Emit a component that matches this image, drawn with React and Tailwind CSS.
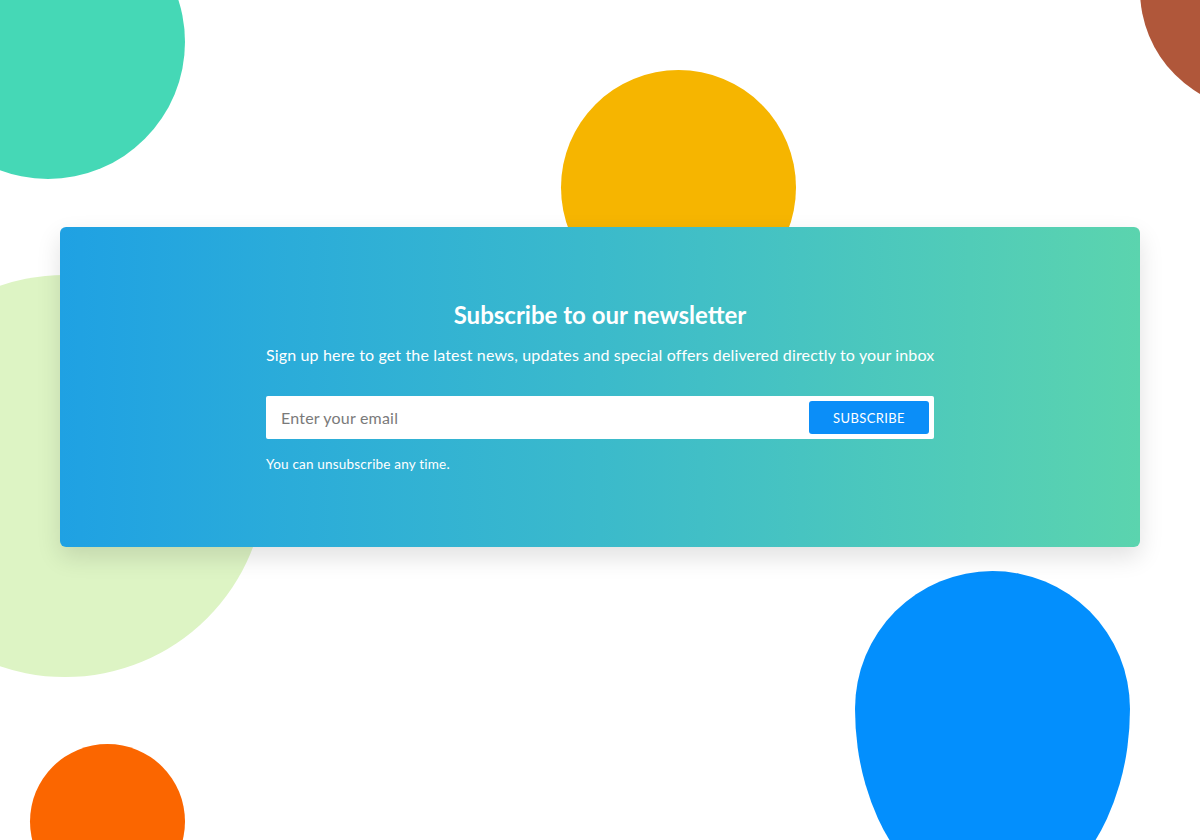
export default function App() {
  return (
    <div
      className="relative h-[840px] w-[1200px] overflow-hidden bg-white"
      style={{ fontFamily: "Lato, 'Noto Sans', sans-serif" }}
    >
      {/* decorative background blobs */}
      <div className="absolute left-[-89px] top-[-95px] h-[274px] w-[274px] rounded-full bg-[#45d8b6]" />
      <div className="absolute left-[561px] top-[70px] h-[235px] w-[235px] rounded-full bg-[#f6b500]" />
      <div className="absolute left-[1140px] top-[-130px] h-[240px] w-[240px] rounded-full bg-[#b0573a]" />
      <div className="absolute left-[-136px] top-[275px] h-[402px] w-[402px] rounded-full bg-[#ddf4c4]" />
      <div className="absolute left-[30px] top-[744px] h-[155px] w-[155px] rounded-full bg-[#fb6600]" />
      <div className="absolute left-[855px] top-[571px] h-[336px] w-[275px] rounded-[50%/41%_41%_59%_59%] bg-[#038ffd]" />

      {/* newsletter card */}
      <div className="relative z-10 mx-[60px] mt-[227px] flex h-[320px] flex-col items-center rounded-[6px] bg-gradient-to-r from-[#1fa1e3] via-[#3bbacb] to-[#5bd4ae] pt-[72px] shadow-[0_10px_24px_rgba(0,0,0,0.12)]">
        <div className="flex w-[668px] flex-col">
          <h2 className="text-center text-[24px] font-bold leading-[32px] text-white">
            Subscribe to our newsletter
          </h2>
          <p className="mt-[12px] whitespace-nowrap text-center text-[16px] leading-[24px] tracking-[0.15px] text-white">
            Sign up here to get the latest news, updates and special offers delivered directly to your inbox
          </p>
          <form className="mt-[29px] flex h-[43px] items-center rounded-[2px] bg-white p-[5px] pl-[15px]">
            <input
              type="email"
              placeholder="Enter your email"
              className="h-full min-w-0 flex-1 bg-transparent text-[16px] tracking-[0.2px] text-gray-700 outline-none placeholder:text-[#7a7a7a]"
            />
            <button
              type="button"
              className="h-[33px] w-[120px] rounded-[3px] bg-[#0b8ef8] pt-[2px] text-[13px] tracking-[0.4px] text-white"
            >
              SUBSCRIBE
            </button>
          </form>
          <p className="mt-[16px] text-[13.5px] leading-[18px] tracking-[0.2px] text-white">
            You can unsubscribe any time.
          </p>
        </div>
      </div>
    </div>
  );
}
